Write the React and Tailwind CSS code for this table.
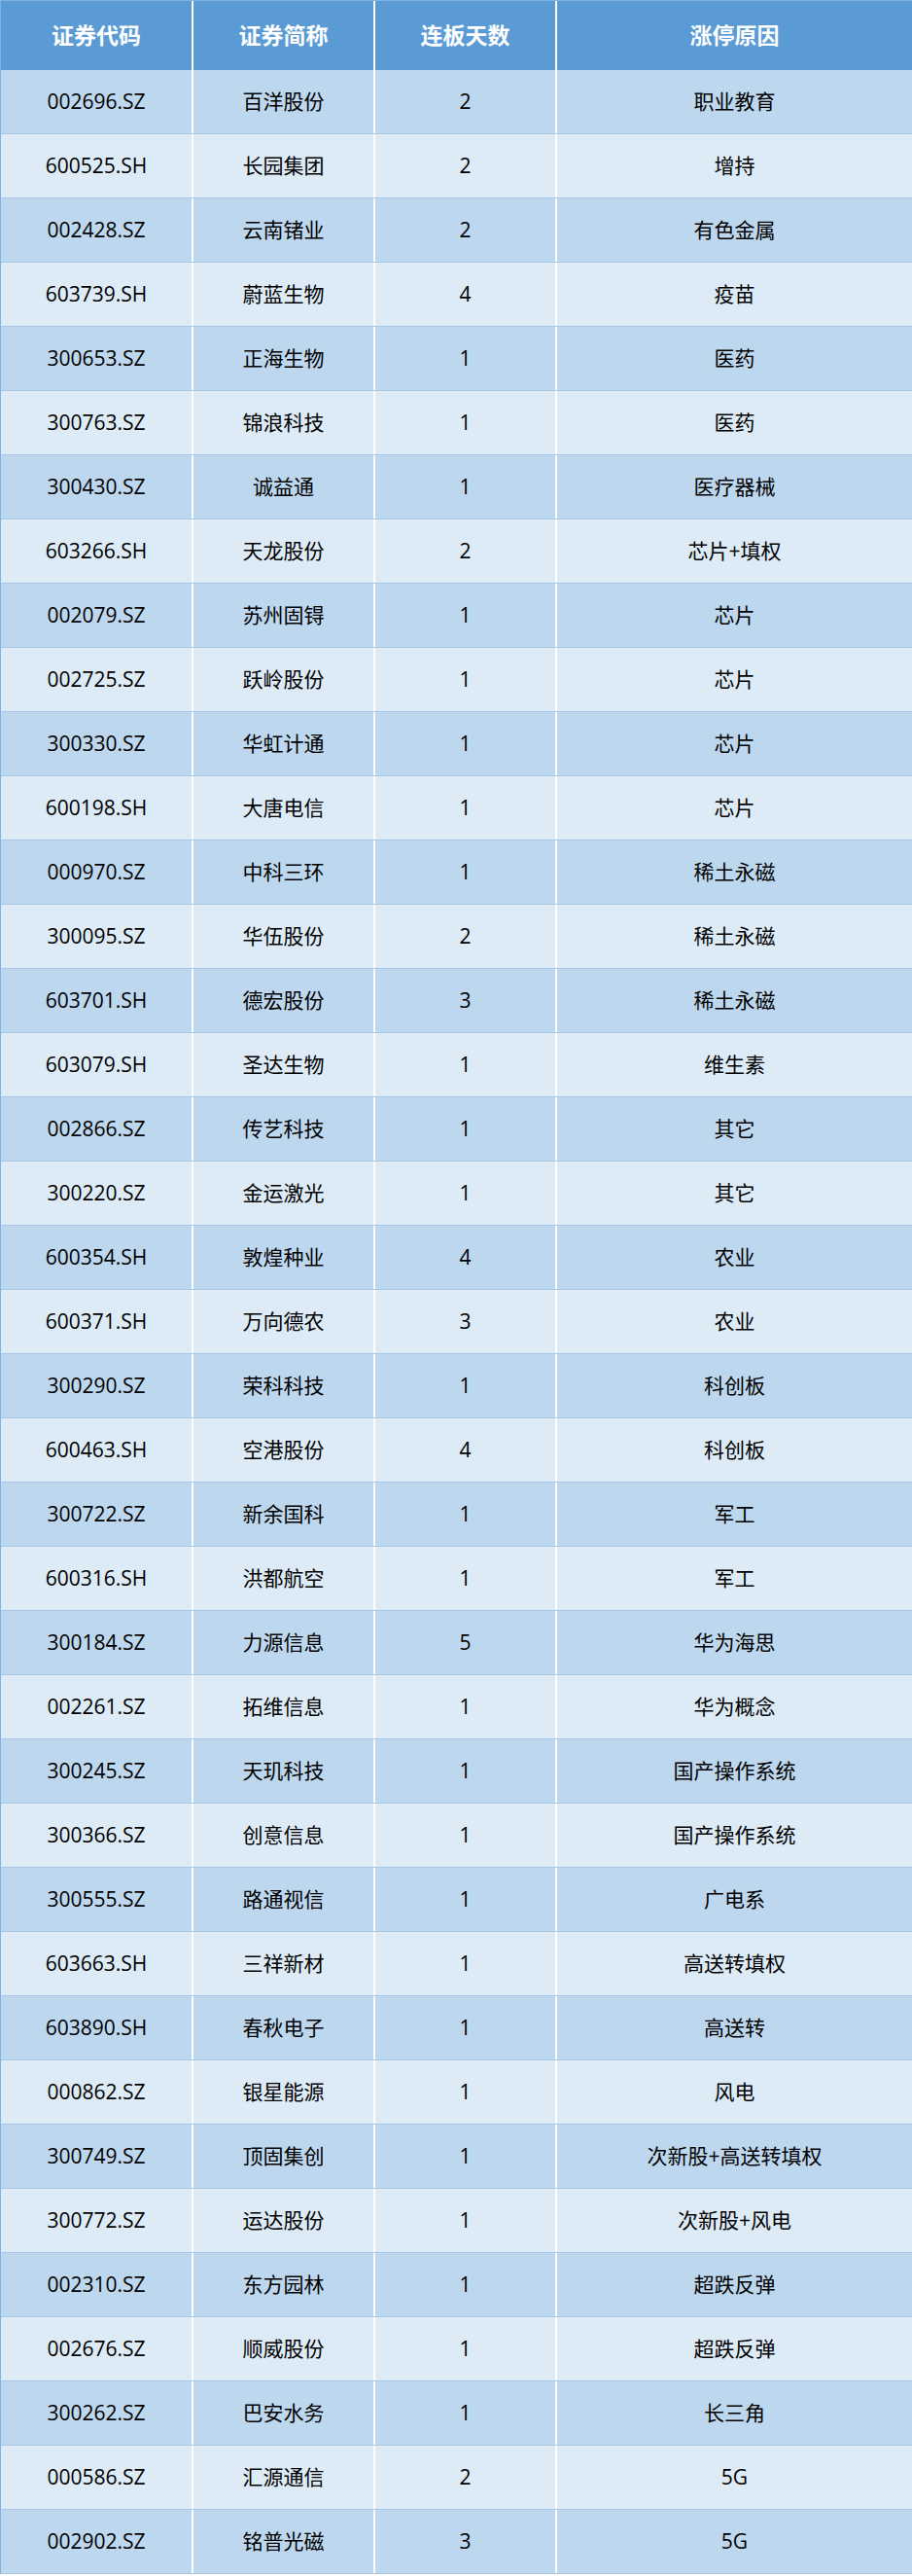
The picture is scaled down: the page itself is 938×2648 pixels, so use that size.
const rows = [
  ["002696.SZ", "百洋股份", "2", "职业教育"],
  ["600525.SH", "长园集团", "2", "增持"],
  ["002428.SZ", "云南锗业", "2", "有色金属"],
  ["603739.SH", "蔚蓝生物", "4", "疫苗"],
  ["300653.SZ", "正海生物", "1", "医药"],
  ["300763.SZ", "锦浪科技", "1", "医药"],
  ["300430.SZ", "诚益通", "1", "医疗器械"],
  ["603266.SH", "天龙股份", "2", "芯片+填权"],
  ["002079.SZ", "苏州固锝", "1", "芯片"],
  ["002725.SZ", "跃岭股份", "1", "芯片"],
  ["300330.SZ", "华虹计通", "1", "芯片"],
  ["600198.SH", "大唐电信", "1", "芯片"],
  ["000970.SZ", "中科三环", "1", "稀土永磁"],
  ["300095.SZ", "华伍股份", "2", "稀土永磁"],
  ["603701.SH", "德宏股份", "3", "稀土永磁"],
  ["603079.SH", "圣达生物", "1", "维生素"],
  ["002866.SZ", "传艺科技", "1", "其它"],
  ["300220.SZ", "金运激光", "1", "其它"],
  ["600354.SH", "敦煌种业", "4", "农业"],
  ["600371.SH", "万向德农", "3", "农业"],
  ["300290.SZ", "荣科科技", "1", "科创板"],
  ["600463.SH", "空港股份", "4", "科创板"],
  ["300722.SZ", "新余国科", "1", "军工"],
  ["600316.SH", "洪都航空", "1", "军工"],
  ["300184.SZ", "力源信息", "5", "华为海思"],
  ["002261.SZ", "拓维信息", "1", "华为概念"],
  ["300245.SZ", "天玑科技", "1", "国产操作系统"],
  ["300366.SZ", "创意信息", "1", "国产操作系统"],
  ["300555.SZ", "路通视信", "1", "广电系"],
  ["603663.SH", "三祥新材", "1", "高送转填权"],
  ["603890.SH", "春秋电子", "1", "高送转"],
  ["000862.SZ", "银星能源", "1", "风电"],
  ["300749.SZ", "顶固集创", "1", "次新股+高送转填权"],
  ["300772.SZ", "运达股份", "1", "次新股+风电"],
  ["002310.SZ", "东方园林", "1", "超跌反弹"],
  ["002676.SZ", "顺威股份", "1", "超跌反弹"],
  ["300262.SZ", "巴安水务", "1", "长三角"],
  ["000586.SZ", "汇源通信", "2", "5G"],
  ["002902.SZ", "铭普光磁", "3", "5G"],
];

const headers = ["证券代码", "证券简称", "连板天数", "涨停原因"];

export default function App() {
  return (
    <div
      className="w-[938px] bg-white"
      style={{ fontFamily: '"Open Sans", "Noto Sans CJK SC", sans-serif' }}
    >
      <div className="border-t border-l border-[#7fb2e0]">
        <div className="grid grid-cols-[198px_187px_187px_1fr] h-[71px] bg-[#5b9bd5] text-white font-bold text-[23px]">
          {headers.map((h, i) => (
            <div
              key={i}
              className={`flex items-center justify-center ${i < 3 ? "border-r-2 border-white" : ""}`}
            >
              {h}
            </div>
          ))}
        </div>
        {rows.map((r, idx) => (
          <div
            key={idx}
            className={`grid grid-cols-[198px_187px_187px_1fr] h-[66px] border-b border-[#a9c6e3] text-[21px] text-black ${
              idx % 2 === 0 ? "bg-[#bdd7ee]" : "bg-[#ddebf7]"
            }`}
          >
            {r.map((c, i) => (
              <div
                key={i}
                className={`flex items-center justify-center ${i < 3 ? "border-r-2 border-white" : ""}`}
              >
                {c}
              </div>
            ))}
          </div>
        ))}
      </div>
    </div>
  );
}
